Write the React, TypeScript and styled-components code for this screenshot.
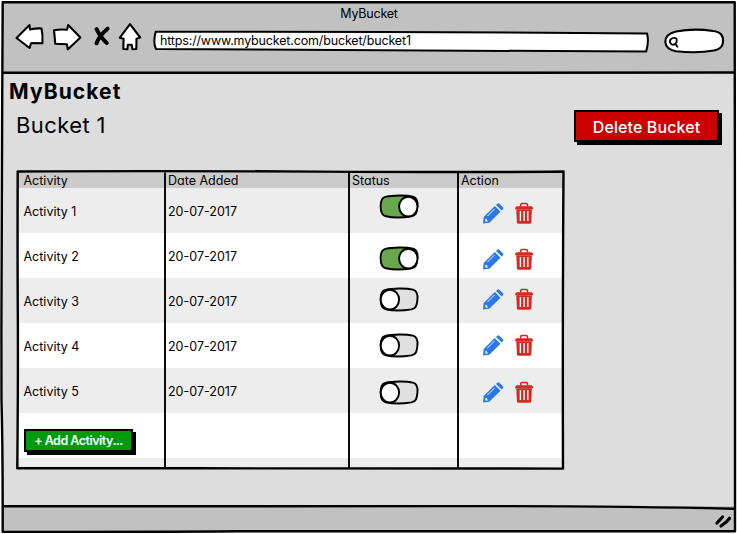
import React from "react";
import styled, { createGlobalStyle } from "styled-components";

const GlobalStyle = createGlobalStyle`
  * { box-sizing: border-box; }
  body { margin: 0; background: #fff; }
`;

const Window = styled.div`
  position: relative;
  width: 737px;
  height: 534px;
  padding: 2px 2px 3px 3px;
  display: flex;
  flex-direction: column;
  overflow: hidden;
  font-family: Inter, "Liberation Sans", sans-serif;
  font-feature-settings: "cv11", "ss03";
  font-size: 12.5px;
  line-height: 16px;
  color: #000;
  white-space: nowrap;
`;

const Outline = styled.svg`
  position: absolute;
  inset: 0;
  width: 100%;
  height: 100%;
  overflow: visible;
  pointer-events: none;
  fill: none;
  stroke: #000;
  stroke-width: 2.4;
  stroke-linecap: round;
  stroke-linejoin: round;
`;

const Header = styled.header`
  height: 70px;
  flex: none;
  background: #c1c1c1;
`;

const Title = styled.div`
  height: 20px;
  padding: 4px 0 0;
  text-align: center;
  letter-spacing: -0.2px;
`;

const Toolbar = styled.div`
  display: flex;
  height: 32px;
`;

const NavIcons = styled.svg`
  width: 128px;
  height: 32px;
  margin-left: 12px;
  flex: none;
  fill: #fff;
  stroke: #000;
  stroke-width: 2.1;
  stroke-linejoin: round;
  stroke-linecap: round;
`;

const Address = styled.div`
  position: relative;
  width: 496px;
  height: 20px;
  margin: 9px 0 0 10px;
  padding: 2px 0 0 7px;
`;

const Search = styled.div`
  position: relative;
  width: 60px;
  height: 24px;
  margin: 7px 0 0 15px;
`;

const AddressText = styled.span`
  position: relative;
  letter-spacing: -0.16px;
`;

const Page = styled.main`
  flex: 1;
  background: #ddd;
  padding: 8px 0 0 6px;
`;

const Brand = styled.h1`
  margin: 0;
  font-size: 21px;
  line-height: 24px;
  height: 28px;
  font-weight: 650;
  letter-spacing: 1.1px;
`;

const Heading = styled.div`
  display: flex;
  align-items: flex-start;
  justify-content: space-between;
  height: 63px;
  padding: 2px 16px 0 7px;
`;

const BucketName = styled.h2`
  margin: 2px 0 0;
  font-size: 22px;
  line-height: 26px;
  font-weight: 400;
  letter-spacing: 0.4px;
`;

const Button = styled.button<{ $size: "large" | "small" }>`
  display: block;
  width: ${(p) => (p.$size === "large" ? 145 : 109)}px;
  height: ${(p) => (p.$size === "large" ? 32 : 23)}px;
  padding: ${(p) => (p.$size === "large" ? "2px 0 0" : "1px 0 0")};
  border: 2px solid #000;
  background: ${(p) => (p.$size === "large" ? "#cc0000" : "#009a0f")};
  box-shadow: 3px 3px 0 #000;
  color: #fff;
  font: inherit;
  font-feature-settings: inherit;
  font-weight: ${(p) => (p.$size === "large" ? 500 : 600)};
  font-size: ${(p) => (p.$size === "large" ? 16 : 12.5)}px;
  letter-spacing: ${(p) => (p.$size === "large" ? 0.1 : -0.5)}px;
  line-height: 18px;
`;

const Table = styled.div`
  position: relative;
  width: 547px;
  height: 297px;
  margin-left: 8px;
`;

const Row = styled.div<{ $height: number; $tone: string }>`
  display: grid;
  grid-template-columns: 148px 184px 109px 106px;
  height: ${(p) => p.$height}px;
  background: ${(p) => p.$tone};
`;

const Cell = styled.div<{ $top?: number; $left?: number }>`
  display: flex;
  gap: 11px;
  padding: ${(p) => p.$top ?? 0}px 0 0 ${(p) => p.$left ?? 6.5}px;
`;

const Footer = styled.footer`
  height: 25px;
  flex: none;
  background: #c1c1c1;
`;

const Glyph = styled.svg`
  display: block;
  flex: none;
  overflow: visible;
`;

function Toggle({ on }: { on: boolean }) {
  return (
    <Glyph width="40" height="24" viewBox="-0.4 0.3 40 24" stroke="#000" strokeWidth="1.9">
      <path
        d="M6 2.2C13 .5 27 .3 33.5 2C38 3.3 38.6 7 38 12C37.5 18 36.5 20.8 32 21.7C24 23 13 23.1 6.5 21.6C2 20.5 1.2 16 1.2 11.5C1.2 6 2.5 3 6 2.2Z"
        fill={on ? "#68a74d" : "#e0e0e0"}
      />
      <ellipse cx={on ? 28.9 : 10.5} cy="11.9" rx="9.2" ry="9.9" fill="#fff" />
    </Glyph>
  );
}

function Pencil() {
  return (
    <Glyph width="21" height="21" viewBox="0 0 21 21">
      <path d="M0 20.5L.7 14L11.8 3L17.5 8.8L6.3 19.8Z" fill="#2b78e4" />
      <path d="M13 1.9L14.3.7Q15.3-.1 16.3.7L19.9 4.3Q20.7 5.3 19.9 6.3L18.7 7.5Z" fill="#2b78e4" />
      <path d="M4.3 13.2L11.6 5.9" stroke="#fff" strokeWidth="0.9" />
      <path d="M2.5 15.8L3.9 16.1L4.2 17.4L5.2 17.8L4.6 18.5L2.9 18.7L2.1 17.9Z" fill="#e5efff" />
    </Glyph>
  );
}

function Trash() {
  return (
    <Glyph width="20" height="22" viewBox="0.3 0.3 20 22">
      <path d="M6 4V2.1Q6 .9 7.2.9H11.6Q12.8.9 12.8 2.1V4" fill="none" stroke="#d0281f" strokeWidth="1.5" />
      <path d="M1.8 3.6H17L18.4 5V6.5H.4V5Z" fill="#d32a23" />
      <path d="M1.6 6.5H17.2L16.6 19.5Q16.4 21 15 21H3.8Q2.4 21 2.2 19.5Z" fill="#d32a23" />
      <path d="M5.7 8.4V18.3M9.4 8.4V18.3M13.1 8.4V18.3" stroke="#fff" strokeWidth="1.4" />
    </Glyph>
  );
}

const activities = [
  { name: "Activity 1", on: true, toggleTop: 7, iconTop: 15 },
  { name: "Activity 2", on: true, toggleTop: 14, iconTop: 16 },
  { name: "Activity 3", on: false, toggleTop: 10, iconTop: 11 },
  { name: "Activity 4", on: false, toggleTop: 11, iconTop: 12 },
  { name: "Activity 5", on: false, toggleTop: 13, iconTop: 14 },
];

export default function App() {
  return (
    <>
      <GlobalStyle />
      <Window>
        <Header>
          <Title>MyBucket</Title>
          <Toolbar>
            <NavIcons viewBox="15 22 128 32">
              <path d="M16.5 38L29.5 25L30 29.5Q37 28 41.5 28.5Q43 35 42.4 43.3Q35 43 31 43.2L29.6 48Z" />
              <path d="M54 30.2Q60 29.2 67 29.8L68.2 25L80.4 37.5L67.7 49.4L67 44.3L55.3 43.8Z" />
              <path d="M96.5 29.2Q101 38 106.8 43M107.6 28.7Q99 36 96.5 43.3" fill="none" strokeWidth="4" />
              <path d="M130 24.2L140.2 37.5L136.5 38.8L136.3 49L132.4 49.2L131.7 44.8H127.8L127.4 49.3L123.3 49L123.6 38.8L119.7 37.8Z" />
            </NavIcons>
            <Address>
              <Outline viewBox="0 0 496 20">
                <path d="M2.7.8Q250 .4 494 2.4Q496.2 10 493.2 20.6Q300 20 3 18Q-.2 12 2.7.8Z" fill="#fff" strokeWidth="2" />
              </Outline>
              <AddressText>https://www.mybucket.com/bucket/bucket1</AddressText>
            </Address>
            <Search>
              <Outline viewBox="0 0 60 24">
                <path d="M12 2.5Q30-1 49 2Q60 3 59 13Q58.5 20 50 21.5Q34 24.5 12 22.3Q2 20.5 1.3 13Q1.2 5 12 2.5Z" fill="#fff" strokeWidth="2.1" />
                <path d="M12.6 9.7Q9.5 7.8 6.5 10.5Q5 13.5 7.5 15.4Q11 16.6 12.6 13.2V9.7M11.5 15L13.4 17.8" strokeWidth="1.8" />
              </Outline>
            </Search>
          </Toolbar>
        </Header>
        <Page>
          <Brand>MyBucket</Brand>
          <Heading>
            <BucketName>Bucket 1</BucketName>
            <Button $size="large">Delete Bucket</Button>
          </Heading>
          <Table>
            <Row $height={17} $tone="#cbcbcb">
              <Cell $top={2}>Activity</Cell>
              <Cell $top={2} $left={3}>Date Added</Cell>
              <Cell $top={2} $left={3}>Status</Cell>
              <Cell $top={2} $left={3}>Action</Cell>
            </Row>
            {activities.map((a, i) => (
              <Row key={a.name} $height={45} $tone={i % 2 ? "#fff" : "#ededed"}>
                <Cell $top={16}>{a.name}</Cell>
                <Cell $top={16} $left={3}>20-07-2017</Cell>
                <Cell $top={a.toggleTop} $left={30}><Toggle on={a.on} /></Cell>
                <Cell $top={a.iconTop} $left={25}><Pencil /><Trash /></Cell>
              </Row>
            ))}
            <Row $height={45} $tone="#fff">
              <Cell $top={16} $left={7}>
                <Button $size="small">+ Add Activity...</Button>
              </Cell>
            </Row>
            <Row $height={10} $tone="#ededed" />
            <Outline viewBox="0 0 547 297">
              <path d="M.7.5Q130-.3 300 .6T546.5.5Q545.5 150 546 297.6Q300 297.5 180 297.3T.3 297.3Q1.2 200 .8 140T.7.5Z" />
              <path d="M148 1.5V297M332 1V297M441 1V297" strokeWidth="1.9" strokeLinecap="butt" />
            </Outline>
          </Table>
        </Page>
        <Footer />
        <Outline viewBox="0 0 737 534">
          <path d="M2.7 2.3Q350 1.5 734.7 2.3Q734.5 160 735 300Q735.5 450 735 531.3Q500 532 240 531.3Q100 532.2 2.7 531.8Q2.8 450 1.5 400Q1.2 250 2.2 100Z" />
          <path d="M3 72.7Q180 73.3 400 72.8T734 72.5M3 506.3Q250 507 470 506.1Q620 506 734 508.8" />
          <path d="M717 523L722.5 517M721 526Q727 522 729.5 518.3" strokeWidth="3.2" />
        </Outline>
      </Window>
    </>
  );
}
